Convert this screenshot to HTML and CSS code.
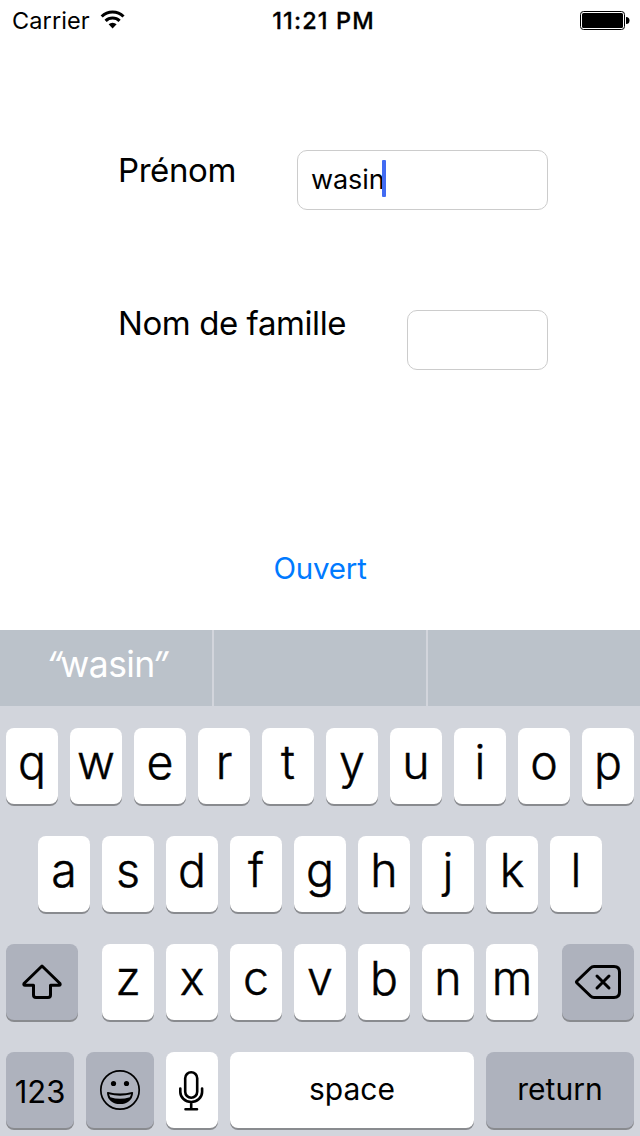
FILE: index.html
```html
<!DOCTYPE html>
<html lang="fr">
<head>
<meta charset="utf-8">
<title>Prénom</title>
<link rel="stylesheet" href="styles.css">
</head>
<body>
<div class="screen">
  <header class="status">
    <div class="carrier">
      <span class="carrier-name">Carrier</span>
      <svg class="wifi" width="26" height="20" viewBox="0 0 26 20">
        <path d="M1.700 7.500a15.500 15.500 0 0 1 21.800 0M5.600 11.900a10 10 0 0 1 14 0" fill="none" stroke="#000" stroke-width="3.100"/>
        <path d="M12.600 19.500l-4-4.200a5.800 5.800 0 0 1 8 0z"/>
      </svg>
    </div>
    <span class="time">11:21 PM</span>
    <svg class="battery" width="50" height="20" viewBox="0 0 50 20">
      <rect x=".5" y=".5" width="44" height="18" rx="3" fill="#fff" stroke="#000"/>
      <rect x="2" y="2" width="41" height="15" rx="1.500"/>
      <path d="M46 6a3.500 3.500 0 0 1 0 7z"/>
    </svg>
  </header>
  <main class="form">
    <div class="row">
      <label class="label label-first">Prénom</label>
      <div class="field field-wide"><span class="value">wasin</span><i class="caret"></i></div>
    </div>
    <div class="row row-family">
      <label class="label label-family">Nom de famille</label>
      <div class="field field-narrow"></div>
    </div>
    <div class="action"><a class="open">Ouvert</a></div>
  </main>
  <section class="keyboard">
    <div class="predictions">
      <div class="prediction"><span class="quote">“</span><span class="candidate">wasin</span><span class="quote closing">”</span></div>
      <div class="prediction"></div>
      <div class="prediction"></div>
    </div>
    <div class="keys">
      <div class="keyrow"><b class="key">q</b><b class="key">w</b><b class="key">e</b><b class="key">r</b><b class="key">t</b><b class="key">y</b><b class="key">u</b><b class="key">i</b><b class="key">o</b><b class="key">p</b></div>
      <div class="keyrow"><b class="key">a</b><b class="key">s</b><b class="key">d</b><b class="key">f</b><b class="key">g</b><b class="key">h</b><b class="key">j</b><b class="key">k</b><b class="key">l</b></div>
      <div class="keyrow spread">
        <div class="key dark edge">
          <svg width="72" height="76" viewBox="0 0 72 76" fill="none" stroke="#000" stroke-width="3" stroke-linejoin="round"><path d="M36 22L18 39.500Q17.300 41.300 19 41.300H27.500V51Q27.500 53.500 30 53.500H42Q44.500 53.500 44.500 51V41.300H53Q54.700 41.300 54 39.500Z"/></svg>
        </div>
        <div class="keyrow"><b class="key">z</b><b class="key">x</b><b class="key">c</b><b class="key">v</b><b class="key">b</b><b class="key">n</b><b class="key">m</b></div>
        <div class="key dark edge">
          <svg width="72" height="76" viewBox="0 0 72 76" fill="none" stroke="#000" stroke-width="3" stroke-linejoin="round" stroke-linecap="round"><path d="M32 22.500H52Q57.500 22.500 57.500 28V48Q57.500 53.500 52 53.500H32Q30 53.500 28.500 52L15 39Q14 38 15 37L28.500 24Q30 22.500 32 22.500ZM35 32L47 44M47 32L35 44"/></svg>
        </div>
      </div>
      <div class="keyrow">
        <div class="key dark numbers">123</div>
        <div class="key dark emoji">
          <svg width="68" height="76" viewBox="0 0 68 76"><circle cx="34" cy="38" r="19.200" fill="none" stroke="#000" stroke-width="1.700"/><circle cx="27.500" cy="31.500" r="2.600"/><circle cx="40.500" cy="31.500" r="2.600"/><path d="M21.800 40.700Q34 44 46.300 40.700C46 47.500 40.500 51.300 34 51.300S22 47.500 21.800 40.700Z" stroke="#000" stroke-width="1.600" stroke-linejoin="round"/><path d="M22.900 42.300Q34 45 45.200 42.300L43.800 45.300Q34 48.300 24.300 45.300Z" fill="#aeb2bd"/></svg>
        </div>
        <div class="key mic">
          <svg width="52" height="76" viewBox="0 0 52 76" fill="none" stroke="#000" stroke-width="2.600" stroke-linecap="round"><rect x="19.200" y="20.200" width="12" height="25.600" rx="6"/><path d="M14.300 36.500V40A10.900 10 0 0 0 36.100 40V36.500M25.200 50V57M19.500 57.200H31"/></svg>
        </div>
        <div class="key word space"><span>space</span></div>
        <div class="key dark word return"><span>return</span></div>
      </div>
    </div>
  </section>
</div>
</body>
</html>
```
FILE: styles.css
```css
* { box-sizing: border-box; }
body { margin: 0; background: #fff; color: #000; font-family: Inter, "Liberation Sans", sans-serif; }
.screen { width: 640px; height: 1136px; display: flex; flex-direction: column; overflow: hidden; }
.status { height: 40px; display: grid; grid-template-columns: 1fr 110px 1fr; padding: 0 11px 0 12px; font-size: 23.5px; line-height: 41px; white-space: nowrap; }
.carrier { display: flex; }
.carrier-name { width: 88px; letter-spacing: .1px; }
.wifi { margin-top: 9px; }
.time { font-weight: 500; text-align: center; letter-spacing: 1.1px; padding-left: 6px; -webkit-text-stroke: .3px #000; }
.battery { justify-self: end; margin: 11px -1px 0 0; }
.form { height: 590px; padding: 110px 92px 0 118px; }
.row { display: flex; justify-content: space-between; height: 60px; }
.row-family { margin-top: 100px; }
.label { font-size: 33px; line-height: 40px; white-space: nowrap; letter-spacing: -.42px; }
.label-family { margin-top: -7px; }
.field { height: 60px; border: 1px solid #ccc; border-radius: 10px; display: flex; align-items: center; padding-left: 13px; }
.field-wide { width: 251px; }
.field-narrow { width: 141px; }
.value { font-size: 27px; line-height: 58px; letter-spacing: -.1px; }
.caret { width: 4px; height: 37px; margin: 0 0 3px -3px; border-radius: 1px; background: #426bf2; }
.action { margin: 178px -92px 0 -118px; text-align: center; }
.open { color: #007aff; font-size: 29.5px; line-height: 40px; letter-spacing: -.2px; }
.keyboard { height: 506px; background: #d2d5dc; }
.predictions { display: grid; grid-template-columns: 212px 212px 212px; gap: 2px; height: 76px; background: #d2d5dc; }
.predictions { grid-template-columns: 212px 212px 1fr; }
.prediction { background: #bbc2ca; color: #fff; text-align: center; font-size: 35.5px; line-height: 69px; }
.candidate { letter-spacing: -.6px; }
.quote { display: inline-block; transform: skewX(-12deg); letter-spacing: -1px; }
.closing { margin-left: -3px; }
.keys { padding: 22px 6px 0; display: flex; flex-direction: column; gap: 32px; }
.keyrow { display: flex; justify-content: center; gap: 12px; }
.spread { justify-content: space-between; }
.key { width: 52px; height: 76px; border-radius: 8px; background: #fff; box-shadow: 0 2px 0 #898b8f; text-align: center; font-size: 46.5px; font-weight: 300; line-height: 68px; }
b.key { -webkit-text-stroke: .45px #000; }
.key svg { display: block; }
.dark { background: #aeb2bd; }
.edge { width: 72px; }
.numbers { width: 68px; font-size: 31px; font-weight: 400; line-height: 80px; }
.emoji { width: 68px; }
.word { font-size: 30px; font-weight: 400; line-height: 74px; }
.space { width: 244px; }
.return { width: 148px; }
```
